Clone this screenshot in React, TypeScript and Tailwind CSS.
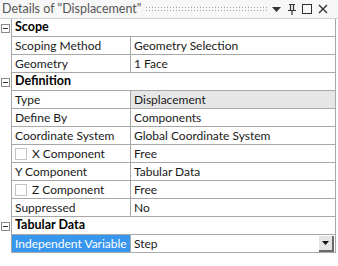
import { ReactNode } from 'react'

const font = { fontFamily: 'Lato, "Noto Sans", sans-serif' }

function Collapse() {
  return (
    <div className="flex h-full w-[11px] items-center justify-center">
      <div className="flex h-[9px] w-[9px] items-center justify-center border border-[#8c8c8c] bg-white">
        <div className="h-px w-[5px] bg-[#333]" />
      </div>
    </div>
  )
}

function Group({ title }: { title: string }) {
  return (
    <div className="flex h-[18px]">
      <Collapse />
      <div className="flex flex-1 items-center whitespace-nowrap border-b border-l border-[#a8a8a8] pl-[3px] text-[12.5px] font-bold text-black">
        {title}
      </div>
    </div>
  )
}

interface RowProps {
  label: ReactNode
  value: ReactNode
  check?: boolean
  gray?: boolean
  selected?: boolean
  last?: boolean
}

function Row({ label, value, check, gray, selected, last }: RowProps) {
  return (
    <div className="flex h-[18px]">
      <div className="w-[11px]" />
      <div className="flex flex-1 border-b border-l border-[#a8a8a8]">
        <div
          className={
            'flex w-[119px] items-center whitespace-nowrap border-r border-[#a8a8a8] pl-[3px] text-[12px] ' +
            (selected ? 'bg-[#3796ed] text-white' : 'text-[#1a1a1a]')
          }
        >
          {check && (
            <div className="mr-[5px] h-[12px] w-[12px] border border-[#c4c4c4] bg-white" />
          )}
          {label}
        </div>
        <div
          className={
            'flex flex-1 items-center whitespace-nowrap pl-[3px] text-[12px] text-[#1a1a1a] ' +
            (gray ? 'bg-[#e6e6e6]' : 'bg-white')
          }
        >
          <span className="flex-1">{value}</span>
          {last && (
            <div className="mr-[1px] flex h-[16px] w-[15px] items-center justify-center border-r-2 border-b-2 border-[#6b6b6b] bg-[#e4e4e4]">
              <svg width="7" height="4" viewBox="0 0 7 4">
                <path d="M0 0h7L3.5 4z" fill="#111" />
              </svg>
            </div>
          )}
        </div>
      </div>
    </div>
  )
}

export default function App() {
  return (
    <div className="h-[266px] w-[338px] overflow-hidden bg-white" style={font}>
      {/* title bar */}
      <div className="flex h-[19px] items-center border-b border-[#d0d0d0] bg-[#f7f7f7] pl-[2px] pr-[10px]">
        <span className="whitespace-nowrap text-[12.5px] leading-none text-[#555]">Details of "Displacement"</span>
        <div className="ml-[4px] mr-[4px] h-[7px] flex-1 bg-[radial-gradient(circle,#a0a0a0_0.7px,transparent_0.9px)] bg-[length:3px_3px]" />
        <svg width="9" height="5" viewBox="0 0 9 5" className="mr-[7px]">
          <path d="M0 0h9L4.5 5z" fill="#333" />
        </svg>
        <svg width="8" height="11" viewBox="0 0 8 11" className="mr-[6px]">
          <path d="M1 0.5h6M2.5 0.5v6M5.5 0.5v6M0 6.5h8M4 6.5v4.5" stroke="#333" strokeWidth="1.2" fill="none" />
        </svg>
        <div className="mr-[6px] h-[10px] w-[10px] border-[1.5px] border-[#333]" />
        <svg width="10" height="10" viewBox="0 0 10 10">
          <path d="M1 1l8 8M9 1l-8 8" stroke="#333" strokeWidth="1.4" />
        </svg>
      </div>

      <div className="w-[336px] border-r border-[#a8a8a8]">
        <Group title="Scope" />
        <Row label="Scoping Method" value="Geometry Selection" />
        <Row label="Geometry" value="1 Face" />
        <Group title="Definition" />
        <Row label="Type" value="Displacement" gray />
        <Row label="Define By" value="Components" />
        <Row label="Coordinate System" value="Global Coordinate System" />
        <Row label="X Component" value="Free" check />
        <Row label="Y Component" value="Tabular Data" />
        <Row label="Z Component" value="Free" check />
        <Row label="Suppressed" value="No" />
        <Group title="Tabular Data" />
        <Row label="Independent Variable" value="Step" selected last />
      </div>
    </div>
  )
}
